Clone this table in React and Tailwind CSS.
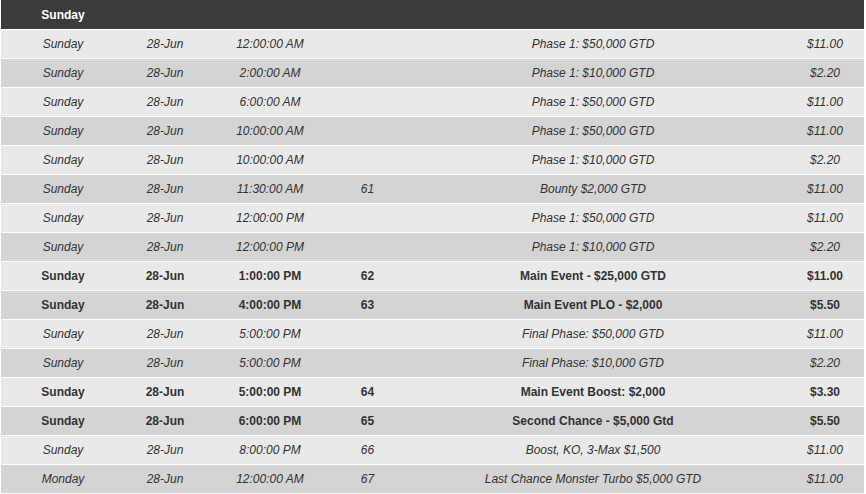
import React from 'react';

const rows = [
    { day: 'Sunday', date: '28-Jun', time: '12:00:00 AM', id: '', name: 'Phase 1: $50,000 GTD', buyIn: '$11.00' },
    { day: 'Sunday', date: '28-Jun', time: '2:00:00 AM', id: '', name: 'Phase 1: $10,000 GTD', buyIn: '$2.20' },
    { day: 'Sunday', date: '28-Jun', time: '6:00:00 AM', id: '', name: 'Phase 1: $50,000 GTD', buyIn: '$11.00' },
    { day: 'Sunday', date: '28-Jun', time: '10:00:00 AM', id: '', name: 'Phase 1: $50,000 GTD', buyIn: '$11.00' },
    { day: 'Sunday', date: '28-Jun', time: '10:00:00 AM', id: '', name: 'Phase 1: $10,000 GTD', buyIn: '$2.20' },
    { day: 'Sunday', date: '28-Jun', time: '11:30:00 AM', id: '61', name: 'Bounty $2,000 GTD', buyIn: '$11.00' },
    { day: 'Sunday', date: '28-Jun', time: '12:00:00 PM', id: '', name: 'Phase 1: $50,000 GTD', buyIn: '$11.00' },
    { day: 'Sunday', date: '28-Jun', time: '12:00:00 PM', id: '', name: 'Phase 1: $10,000 GTD', buyIn: '$2.20' },
    { day: 'Sunday', date: '28-Jun', time: '1:00:00 PM', id: '62', name: 'Main Event - $25,000 GTD', buyIn: '$11.00', main: true },
    { day: 'Sunday', date: '28-Jun', time: '4:00:00 PM', id: '63', name: 'Main Event PLO - $2,000', buyIn: '$5.50', main: true },
    { day: 'Sunday', date: '28-Jun', time: '5:00:00 PM', id: '', name: 'Final Phase: $50,000 GTD', buyIn: '$11.00' },
    { day: 'Sunday', date: '28-Jun', time: '5:00:00 PM', id: '', name: 'Final Phase: $10,000 GTD', buyIn: '$2.20' },
    { day: 'Sunday', date: '28-Jun', time: '5:00:00 PM', id: '64', name: 'Main Event Boost: $2,000', buyIn: '$3.30', main: true },
    { day: 'Sunday', date: '28-Jun', time: '6:00:00 PM', id: '65', name: 'Second Chance - $5,000 Gtd', buyIn: '$5.50', main: true },
    { day: 'Sunday', date: '28-Jun', time: '8:00:00 PM', id: '66', name: 'Boost, KO, 3-Max $1,500', buyIn: '$11.00' },
    { day: 'Monday', date: '28-Jun', time: '12:00:00 AM', id: '67', name: 'Last Chance Monster Turbo $5,000 GTD', buyIn: '$11.00' },
];

// column widths picked so every cell centres where the schedule table has it
const cols = 'grid grid-cols-[124px_80px_130px_65px_386px_78px] items-center text-center';

const App = () => {
    return (
        <div className="w-[866px] h-[494px] bg-white pl-px pr-[2px] font-['Liberation_Sans',Arial,sans-serif] text-[12px] text-[#333333] overflow-hidden">
            {/* day header */}
            <div className={`${cols} h-[29px] bg-[#3a3b3a] text-white font-bold`}>
                <div>Sunday</div>
            </div>
            {rows.map((r, i) => (
                <div
                    key={i}
                    className={`${cols} h-[28px] mt-px ${i % 2 === 0 ? 'bg-[#e9e9e9]' : 'bg-[#d4d4d4]'} ${
                        r.main ? 'font-bold' : 'italic'
                    }`}
                >
                    <div>{r.day}</div>
                    <div>{r.date}</div>
                    <div>{r.time}</div>
                    <div>{r.id}</div>
                    <div>{r.name}</div>
                    <div>{r.buyIn}</div>
                </div>
            ))}
        </div>
    );
};

export default App;
